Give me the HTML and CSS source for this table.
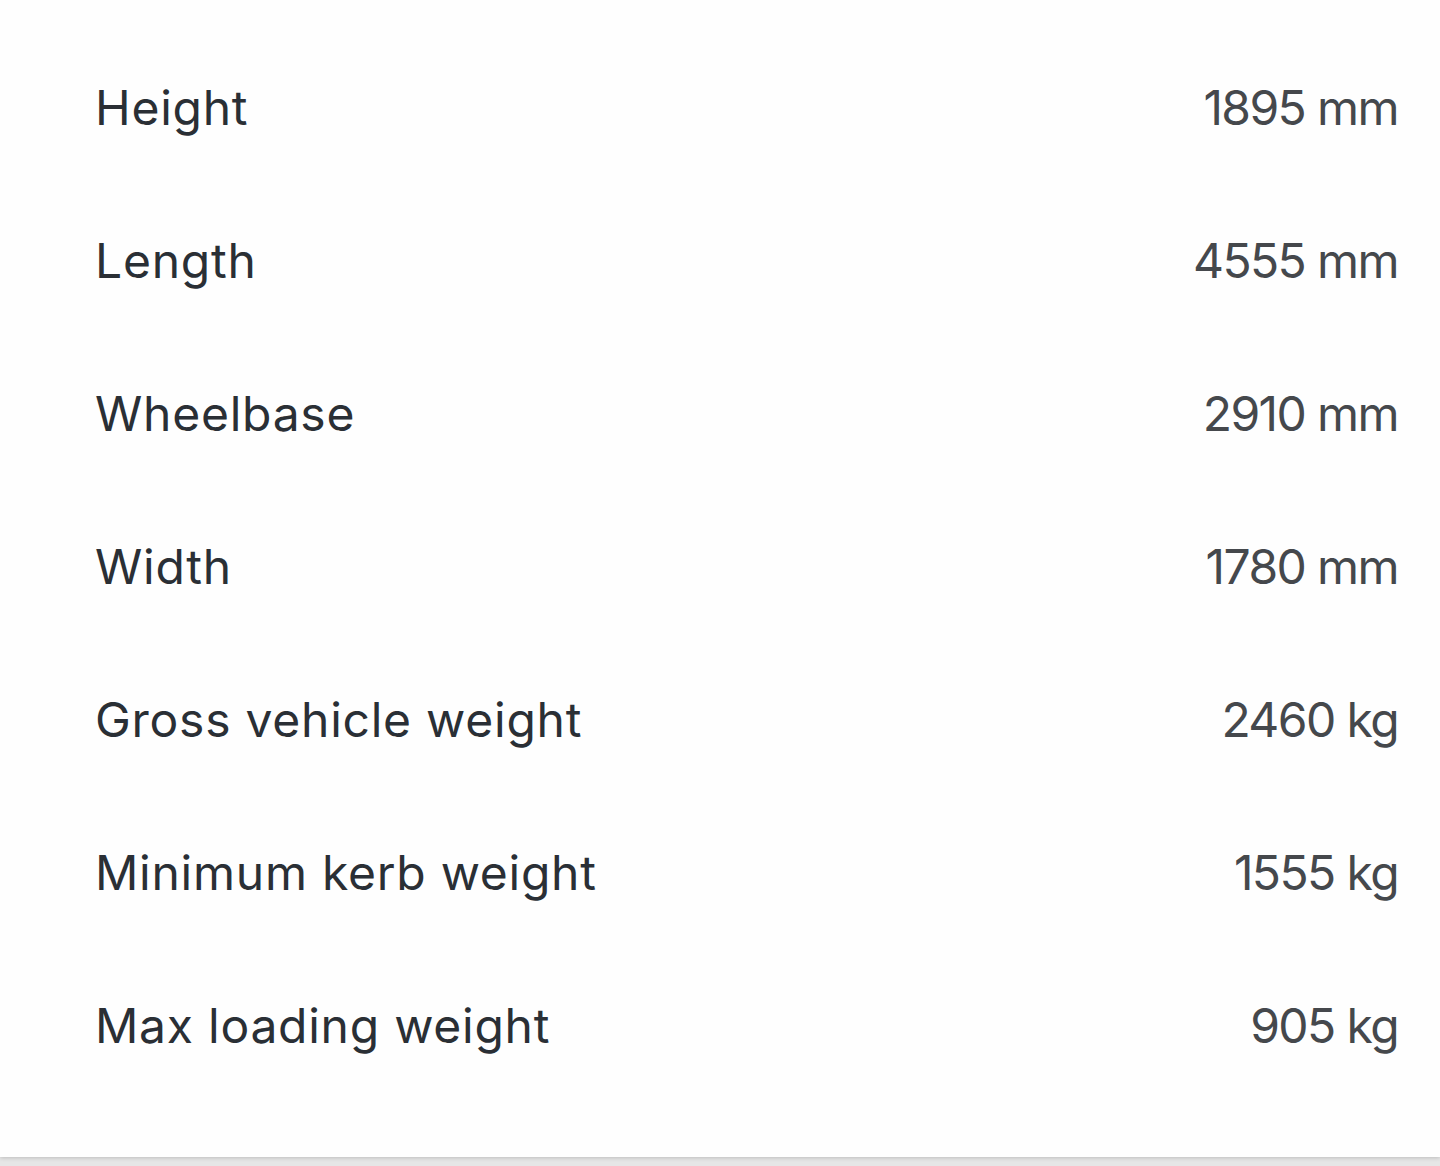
FILE: index.html
```html
<!DOCTYPE html>
<html lang="en">
<head>
<meta charset="utf-8">
<link rel="stylesheet" href="styles.css">
<title>Specifications</title>
</head>
<body>
<div class="card">
  <dl class="specs">
    <div class="row"><dt>Height</dt><dd>1895 mm</dd></div>
    <div class="row"><dt>Length</dt><dd>4555 mm</dd></div>
    <div class="row"><dt>Wheelbase</dt><dd>2910 mm</dd></div>
    <div class="row"><dt>Width</dt><dd>1780 mm</dd></div>
    <div class="row"><dt>Gross vehicle weight</dt><dd>2460 kg</dd></div>
    <div class="row"><dt>Minimum kerb weight</dt><dd>1555 kg</dd></div>
    <div class="row"><dt>Max loading weight</dt><dd>905 kg</dd></div>
  </dl>
</div>
</body>
</html>
```
FILE: styles.css
```css
html, body {
  margin: 0;
  padding: 0;
  background: #e6e6e6;
}
body {
  font-family: Inter, "Noto Sans", sans-serif;
  height: 1166px;
  overflow: hidden;
}
.card {
  background: #fefefe;
  height: 1157px;
  box-shadow: 0 1px 4px rgba(0,0,0,0.18);
  padding: 31px 42px 0 95px;
  box-sizing: border-box;
}
.specs {
  margin: 0;
  display: flex;
  flex-direction: column;
}
.row {
  display: flex;
  justify-content: space-between;
  align-items: center;
  height: 153px;
}
dt {
  font-size: 48px;
  color: #2a2f35;
  letter-spacing: 0.75px;
}
dd {
  margin: 0;
  font-size: 48px;
  color: #45484c;
  letter-spacing: -1.6px;
}
```
